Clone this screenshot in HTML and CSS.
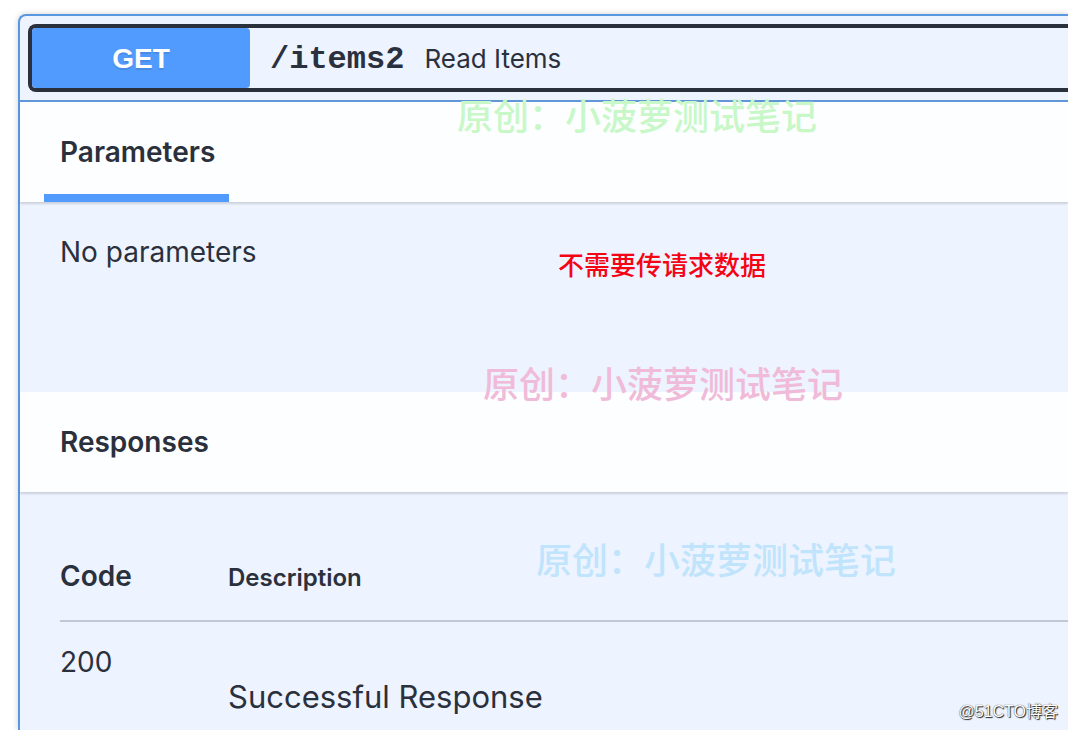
FILE: index.html
```html
<!DOCTYPE html>
<html lang="en">
<head>
<meta charset="utf-8">
<meta name="viewport" content="width=device-width, initial-scale=1">
<title>Read Items</title>
<link rel="stylesheet" href="styles.css">
</head>
<body>
<main class="opblock">
  <div class="summary">
    <button class="summary-control" type="button" aria-expanded="true">
      <span class="method">GET</span>
      <span class="path">/items2</span>
      <span class="summary-text">Read Items</span>
    </button>
  </div>
  <section>
    <div class="section-header">
      <h2 class="tab">Parameters</h2>
    </div>
    <div class="parameters">
      <p class="empty">No parameters</p>
    </div>
  </section>
  <section>
    <div class="section-header">
      <h2 class="section-title">Responses</h2>
    </div>
    <div class="responses">
      <table class="response-table">
        <thead>
          <tr><th class="code-head" scope="col">Code</th><th class="description-head" scope="col">Description</th></tr>
        </thead>
        <tbody>
          <tr><td class="code">200</td><td class="description">Successful Response</td></tr>
        </tbody>
      </table>
    </div>
  </section>
</main>
<span class="note" lang="zh">不需要传请求数据</span>
<span class="watermark watermark-green" lang="zh">原创：小菠萝测试笔记</span>
<span class="watermark watermark-pink" lang="zh">原创：小菠萝测试笔记</span>
<span class="watermark watermark-blue" lang="zh">原创：小菠萝测试笔记</span>
<span class="credit" lang="zh">@51CTO博客</span>
</body>
</html>
```

FILE: styles.css
```css
* {
  box-sizing: border-box;
}

body {
  position: relative;
  display: flex;
  min-height: 100vh;
  margin: 0;
  padding: 14px 0 0 18px;
  background: #fff;
  color: #2b303d;
  font-family: Inter, "Liberation Sans", "Noto Sans CJK SC", sans-serif;
}

h2,
p {
  margin: 0;
}

.opblock {
  flex: 1;
  border: 2px solid #5998e0;
  border-right: 0;
  border-bottom: 0;
  border-radius: 8px 0 0 0;
  background: #edf3ff;
  box-shadow: 0 0 6px rgba(0, 0, 0, 0.19);
}

.summary {
  padding: 8px 0 8px 8px;
  border-bottom: 2px solid #6196d8;
}

.summary-control {
  display: flex;
  align-items: baseline;
  width: 100%;
  height: 68px;
  padding: 0;
  border: 4px solid #2b303d;
  border-right: 0;
  border-radius: 8px 0 0 8px;
  background: #edf3ff;
  color: inherit;
  font-family: inherit;
  text-align: left;
}

.method {
  width: 218px;
  height: 60px;
  border-radius: 4px;
  background: #509bfd;
  color: #fff;
  font: bold 28px/62px "Liberation Sans", Arial, sans-serif;
  text-align: center;
  text-shadow: 0 2px 0 rgba(0, 0, 0, 0.1);
}

.path {
  padding: 0 20px;
  font: bold 32px/36px "Liberation Mono", "Courier New", monospace;
}

.summary-text {
  font-size: 26px;
}

.section-header {
  display: flex;
  height: 100px;
  padding: 0 24px;
  background: #fdfeff;
  box-shadow: 0 2px 2px rgba(0, 0, 0, 0.14);
}

.tab,
.section-title {
  padding: 0 14px 0 16px;
  font-size: 28px;
  font-weight: 600;
  line-height: 100px;
}

.tab {
  border-bottom: 8px solid #509bfd;
}

.parameters {
  height: 190px;
  padding: 30px 40px;
}

.empty {
  font-size: 28px;
  line-height: 40px;
}

.responses {
  padding: 39px 0 0 40px;
}

.response-table {
  width: 100%;
  border-collapse: collapse;
  text-align: left;
}

.response-table th {
  height: 90px;
  padding: 0;
  border-bottom: 2px solid #c1c7d4;
  font-weight: 600;
}

.code-head {
  width: 168px;
  font-size: 28px;
}

.response-table .description-head {
  padding-top: 4px;
  font-size: 24px;
}

.response-table td {
  padding: 20px 0 0;
  line-height: 40px;
  vertical-align: top;
}

.response-table .code {
  font-size: 28px;
}

.response-table .description {
  padding-top: 55px;
  font-size: 31px;
}

.note,
.watermark,
.credit {
  position: absolute;
  font-family: "Noto Sans CJK SC", sans-serif;
  white-space: nowrap;
}

.note {
  top: 245px;
  left: 558px;
  color: #f50414;
  font-size: 26px;
  font-weight: 500;
  line-height: 38px;
}

.watermark {
  font-size: 36px;
  font-weight: 500;
  line-height: 52px;
}

.watermark-green {
  top: 88px;
  left: 457px;
  color: #c8f8c8;
}

.watermark-pink {
  top: 356px;
  left: 483px;
  color: #f0bbd8;
}

.watermark-blue {
  top: 532px;
  left: 536px;
  color: #bfe4fc;
}

.credit {
  right: 10px;
  bottom: 6px;
  color: #fff;
  font-family: "Liberation Sans", "Noto Sans CJK SC", sans-serif;
  font-size: 16px;
  line-height: 24px;
  text-shadow: 1px 1px 1px #222, 0 0 1px #222;
}
```
